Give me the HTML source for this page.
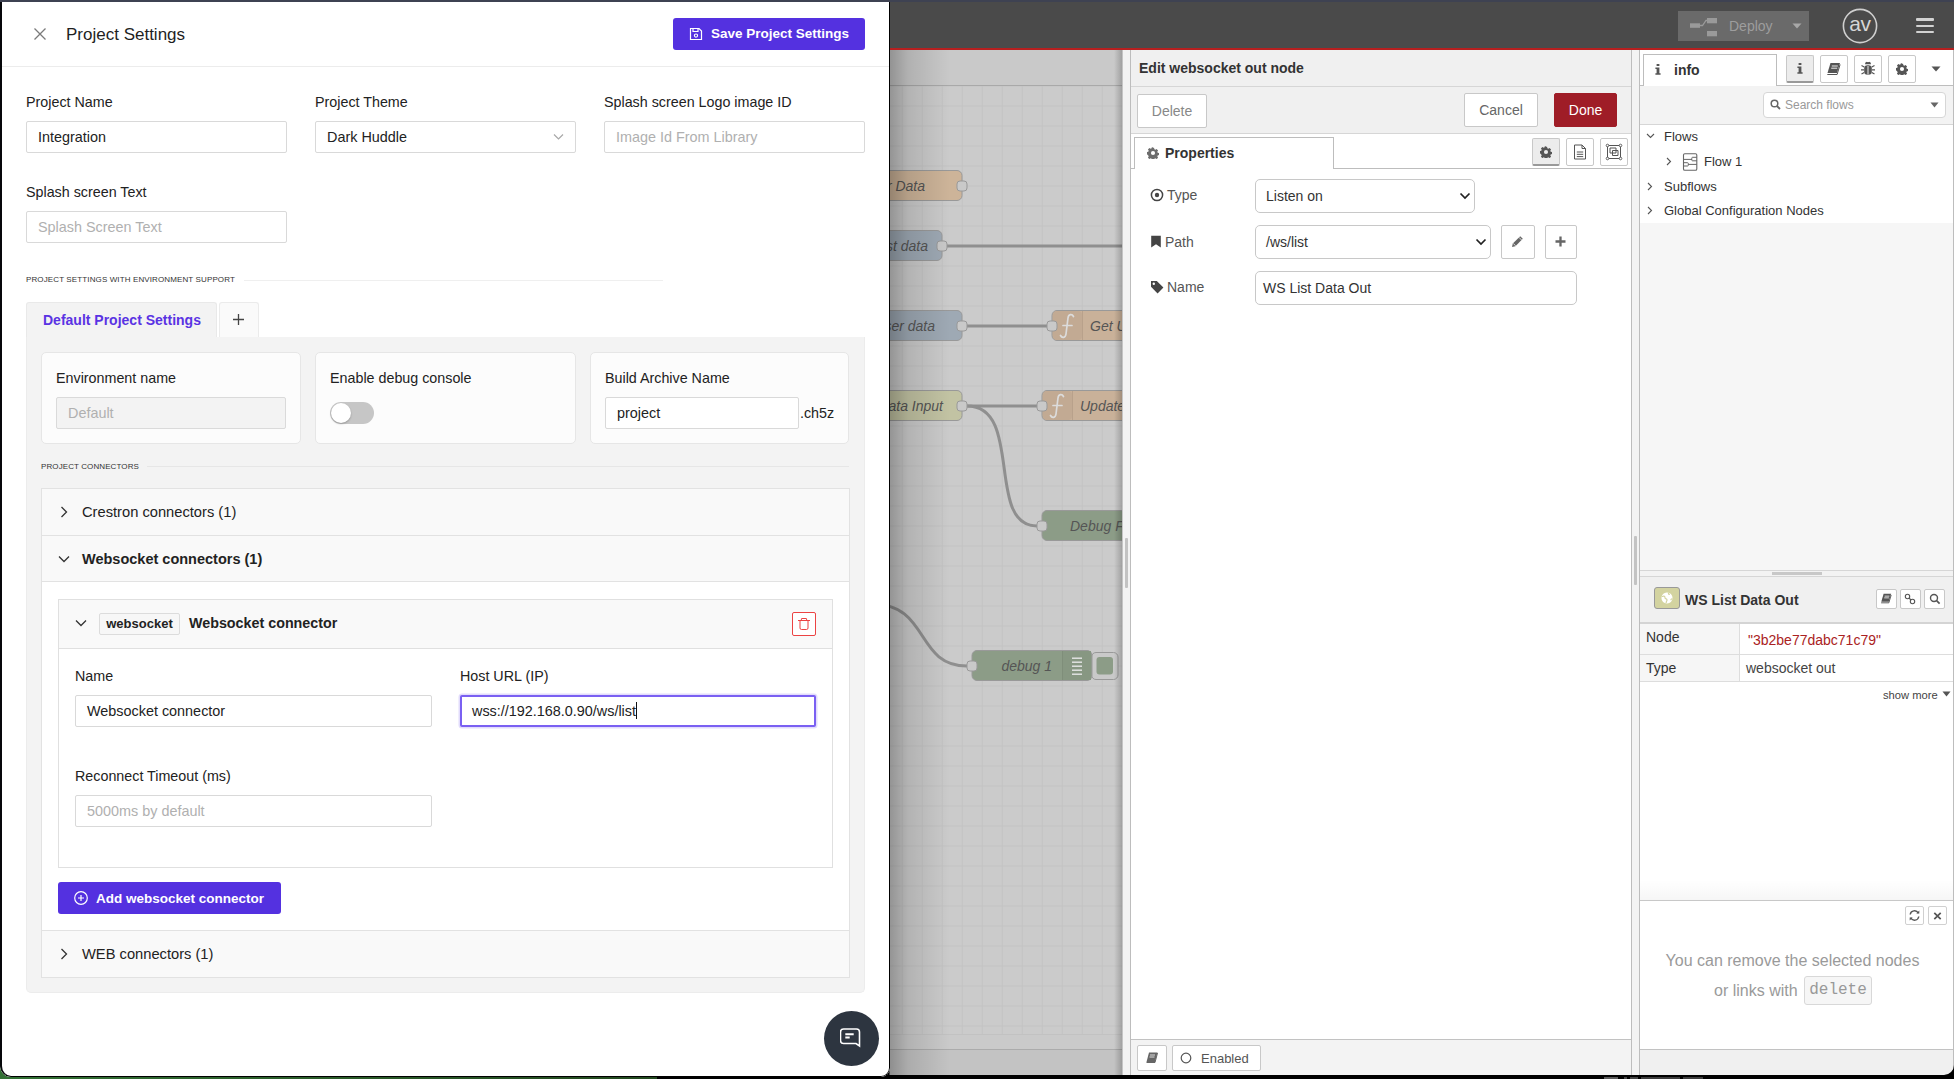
<!DOCTYPE html>
<html><head><meta charset="utf-8">
<style>
*{box-sizing:border-box;margin:0;padding:0}
html,body{width:1954px;height:1079px;overflow:hidden;background:#000;font-family:"Liberation Sans",sans-serif;color:#222}
.a{position:absolute}
/* left drawer */
#drawer{position:absolute;left:0;top:0;width:890px;height:1077px;background:#fff;border-bottom-left-radius:11px;border-bottom-right-radius:9px;overflow:hidden}
#dov{position:absolute;left:0;top:0;width:890px;height:1077px;border-left:2px solid #06070a;border-right:1px solid #000;border-bottom:1px solid #000;border-bottom-left-radius:11px;border-bottom-right-radius:9px}
.lbl{position:absolute;font-size:14.3px;color:#222;line-height:16px;margin-top:-1px;white-space:nowrap}
.inp{position:absolute;height:32px;border:1px solid #d9d9d9;border-radius:2px;background:#fff;font-size:14.4px;line-height:31px;padding-left:11px;color:#222;white-space:nowrap}
.ph{color:#b0b0b0}
.btnp{position:absolute;background:#5431e0;border-radius:3px;color:#fff;font-weight:bold;font-size:13.5px;white-space:nowrap}
.sec{position:absolute;font-size:9px;letter-spacing:0.6px;color:#333;white-space:nowrap}
.card{position:absolute;background:#fcfcfc;border:1px solid #e6e6e6;border-radius:5px}
.acc{position:absolute;left:41px;width:809px;background:#f9f9f9;border-top:1px solid #e2e2e2;font-size:14px;white-space:nowrap}
.nb{position:absolute;background:#fff;border:1px solid #c8c8c8;border-radius:2px;font-size:14px;line-height:32px;text-align:center;white-space:nowrap}
.ib{position:absolute;width:28px;height:28px;background:#fff;border:1px solid #c8c8c8;border-radius:2px}
.rl{position:absolute;font-size:14px;line-height:16px;color:#555;white-space:nowrap}
.sel{position:absolute;background:#fff;border:1px solid #c8c8c8;border-radius:5px;font-size:14px;line-height:32px;padding-left:10px;color:#333;white-space:nowrap}
.tr{position:absolute;font-size:13px;line-height:16px;color:#333;white-space:nowrap}
</style></head>
<body>
<!-- bottom desktop strip -->
<div class="a" style="left:0;top:1060px;width:657px;height:19px;background:linear-gradient(90deg,#327034,#23491f)"></div>


<!-- NODE-RED -->
<div id="nr" class="a" style="left:889px;top:0;width:1065px;height:1075px;background:#4a4a4a;overflow:hidden;border-bottom-right-radius:9px">
<!-- header -->
<div class="a" style="left:0;top:48px;width:1065px;height:2px;background:#b71f1f"></div>
<div class="a" style="left:789px;top:11px;width:131px;height:30px;background:#6a6a6a"></div>
<svg class="a" style="left:800px;top:17px" width="30" height="21" viewBox="0 0 30 21"><rect x="1" y="6.3" width="10" height="4.5" fill="#9a9a9a"/><path d="M10.5 8.5 L13.5 8.5 L17 3.5 L19 3.5" stroke="#9a9a9a" stroke-width="1.3" fill="none"/><rect x="18" y="1" width="10" height="5.3" fill="#9a9a9a"/><rect x="18" y="14" width="10" height="5.3" fill="#9a9a9a"/></svg>
<div class="a" style="left:840px;top:18px;font-size:14px;line-height:16px;color:#9d9d9d">Deploy</div>
<svg class="a" style="left:903px;top:23px" width="10" height="6" viewBox="0 0 10 6"><path d="M0.5 0.5h9l-4.5 5z" fill="#a8a8a8"/></svg>
<svg class="a" style="left:952px;top:8px" width="38" height="38" viewBox="0 0 38 38"><circle cx="19" cy="18" r="16.6" stroke="#cfcfcf" stroke-width="1.6" fill="none"/></svg>
<div class="a" style="left:952px;top:13px;width:38px;text-align:center;font-size:21px;line-height:22px;color:#d6d6d6;letter-spacing:-0.3px">av</div>
<div class="a" style="left:1027px;top:18px;width:18px;height:2.5px;border-radius:1px;background:#d2d2d2"></div>
<div class="a" style="left:1027px;top:24.5px;width:18px;height:2.5px;border-radius:1px;background:#d2d2d2"></div>
<div class="a" style="left:1027px;top:30.5px;width:18px;height:2.5px;border-radius:1px;background:#d2d2d2"></div>
<!-- canvas -->
<div class="a" style="left:1px;top:50px;width:232px;height:1025px;background:#c9c9c9;overflow:hidden">
<svg class="a" style="left:0;top:0" width="232" height="1025" viewBox="890 50 232 1025">
<defs>
<pattern id="grid" x="901.7" y="105.5" width="20" height="20" patternUnits="userSpaceOnUse"><rect x="0" y="0" width="20" height="20" fill="#cbcbcb"/><path d="M0 0.5H20M0.5 0V20" stroke="#c3c3c3" stroke-width="1"/></pattern>
<linearGradient id="lsh" x1="0" x2="1" y1="0" y2="0"><stop offset="0" stop-color="#000" stop-opacity="0.27"/><stop offset="0.3" stop-color="#000" stop-opacity="0.12"/><stop offset="1" stop-color="#000" stop-opacity="0"/></linearGradient>
<linearGradient id="rsh" x1="0" x2="1" y1="0" y2="0"><stop offset="0" stop-color="#000" stop-opacity="0"/><stop offset="1" stop-color="#000" stop-opacity="0.2"/></linearGradient>
</defs>
<rect x="890" y="50" width="232" height="35" fill="#c9c9c9"/>
<rect x="890" y="85" width="232" height="1" fill="#a9a9a9"/>
<rect x="890" y="86" width="232" height="948" fill="url(#grid)"/>
<rect x="890" y="1034" width="232" height="15" fill="#cacaca"/><rect x="890" y="1034" width="232" height="1" fill="#c2c2c2"/>
<rect x="890" y="1049" width="232" height="1" fill="#ababab"/>
<rect x="890" y="1050" width="232" height="25" fill="#c3c3c3"/>
<!-- wires -->
<g stroke="#8f8f8f" stroke-width="3" fill="none">
<path d="M947 246H1122"/>
<path d="M967 326H1047"/>
<path d="M967 406H1037"/>
<path d="M967 406C1024 406 985 526 1037 526"/>
<path d="M872 604C930 604 915 666 967 666"/>
</g>
<!-- nodes -->
<g stroke="#999" stroke-width="1">
<rect x="850" y="170.5" width="112" height="30" rx="5" fill="#cdb499"/>
<rect x="850" y="230.5" width="92" height="30" rx="5" fill="#9ea9b4"/>
<rect x="850" y="310.5" width="112" height="30" rx="5" fill="#9ea9b4"/>
<rect x="850" y="390.5" width="112" height="30" rx="5" fill="#c2c3a3"/>
<rect x="1052" y="310.5" width="120" height="30" rx="5" fill="#c9b199"/>
<rect x="1042" y="390.5" width="120" height="30" rx="5" fill="#c9b199"/>
<rect x="1042" y="510.5" width="120" height="30" rx="5" fill="#8c9c87"/>
<rect x="1091.5" y="652.5" width="26.5" height="27" rx="4.5" fill="#c9c9c9"/>
<rect x="972" y="650.5" width="120" height="30" rx="5" fill="#8c9c87"/>
</g>
<rect x="1053" y="311" width="29" height="29" rx="4" fill="#c2aa93"/>
<rect x="1082" y="311" width="0.8" height="29" fill="#b59e88"/>
<rect x="1043" y="391" width="29" height="29" rx="4" fill="#c2aa93"/>
<rect x="1072" y="391" width="0.8" height="29" fill="#b59e88"/>
<rect x="1062" y="651" width="29" height="29" fill="#879782"/>
<rect x="1062" y="651" width="0.8" height="29" fill="#7d8c78"/>
<rect x="1096.5" y="657" width="16.5" height="17.5" rx="3" fill="#8c9c87"/>
<g fill="#e6e6e6"><rect x="1072" y="657.5" width="10" height="1.4"/><rect x="1072" y="661.5" width="10" height="1.4"/><rect x="1072" y="665.5" width="10" height="1.4"/><rect x="1072" y="669.5" width="10" height="1.4"/><rect x="1072" y="673.5" width="10" height="1.4"/></g>
<path d="M1073.5 316.5C1072 313.5 1068.5 314 1068 318L1066 334C1065.5 338 1062 338.5 1060.5 335.5M1063 325.5H1072 M1063.5 396.5C1062 393.5 1058.5 394 1058 398L1056 414C1055.5 418 1052 418.5 1050.5 415.5M1053 405.5H1062" stroke="#dcdcdc" stroke-width="1.7" fill="none" stroke-linecap="round"/>
<g fill="#555" font-family="Liberation Sans" font-style="italic" font-size="14">
<text x="925" y="190.5" text-anchor="end">r Data</text>
<text x="928" y="250.5" text-anchor="end">st data</text>
<text x="935" y="330.5" text-anchor="end">ser data</text>
<text x="943" y="410.5" text-anchor="end">ata Input</text>
<text x="1090" y="330.5">Get User</text>
<text x="1080" y="410.5">Update</text>
<text x="1070" y="530.5">Debug Flow</text>
<text x="1052" y="670.5" text-anchor="end">debug 1</text>
</g>
<g fill="#c9c9c9" stroke="#999" stroke-width="1">
<rect x="957" y="181" width="10" height="10" rx="3"/>
<rect x="937" y="241" width="10" height="10" rx="3"/>
<rect x="957" y="321" width="10" height="10" rx="3"/>
<rect x="1047" y="321" width="10" height="10" rx="3"/>
<rect x="957" y="401" width="10" height="10" rx="3"/>
<rect x="1037" y="401" width="10" height="10" rx="3"/>
<rect x="1037" y="521" width="10" height="10" rx="3"/>
<rect x="967" y="661" width="10" height="10" rx="3"/>
</g>
<rect x="890" y="50" width="60" height="1025" fill="url(#lsh)"/>
<rect x="1114" y="50" width="8" height="1025" fill="url(#rsh)"/>
</svg>
</div>
<!-- tray strip -->
<div class="a" style="left:233px;top:50px;width:9px;height:1025px;background:#f3f3f3;border-left:1px solid #c4c4c4;border-right:1px solid #bdbdbd"></div>
<div class="a" style="left:236px;top:538px;width:3px;height:50px;background:#c3c3c3;border-radius:1px"></div>
<!-- tray -->
<div id="tray" class="a" style="left:242px;top:50px;width:500px;height:1025px;background:#fff">
</div>
<!-- sidebar separator -->
<div class="a" style="left:742px;top:50px;width:9px;height:1025px;background:#f3f3f3;border-left:1px solid #bdbdbd;border-right:1px solid #bdbdbd"></div>
<div class="a" style="left:745px;top:536px;width:3px;height:49px;background:#c3c3c3;border-radius:1px"></div>
<!-- sidebar -->
<div id="side" class="a" style="left:751px;top:50px;width:314px;height:1025px;background:#fff;border-right:1px solid #bdbdbd">
</div>
</div>
<!-- TRAY CONTENT (page coords) -->
<div class="a" style="left:1131px;top:50px;width:500px;height:37px;background:#f0f0f0;border-bottom:1px solid #d6d6d6"></div>
<div class="a" style="left:1139px;top:60px;font-size:14px;line-height:16px;font-weight:bold;color:#333;white-space:nowrap">Edit websocket out node</div>
<div class="a" style="left:1131px;top:87px;width:500px;height:47px;background:#f0f0f0;border-bottom:1px solid #d6d6d6"></div>
<div class="nb" style="left:1137px;top:94px;width:70px;height:34px;color:#888">Delete</div>
<div class="nb" style="left:1464px;top:93px;width:74px;height:34px;color:#666">Cancel</div>
<div class="nb" style="left:1554px;top:93px;width:63px;height:34px;background:#9f1d27;border-color:#9f1d27;color:#fff">Done</div>
<div class="a" style="left:1131px;top:168px;width:500px;height:1px;background:#bdbdbd"></div>
<div class="a" style="left:1134px;top:137px;width:200px;height:32px;background:#fff;border:1px solid #bdbdbd;border-bottom:none"></div>
<svg class="a" style="left:1147px;top:147px" width="12" height="12" viewBox="0 0 14 14"><path fill="#6c6c6c" d="M7 0.8l1.2 0.2 .4 1.7 1.1.5 1.5-.9 1.7 1.7-.9 1.5.5 1.1 1.7.4v2.4l-1.7.4-.5 1.1.9 1.5-1.7 1.7-1.5-.9-1.1.5-.4 1.7H5.8l-.4-1.7-1.1-.5-1.5.9-1.7-1.7.9-1.5-.5-1.1L-.2 8.2V5.8l1.7-.4.5-1.1-.9-1.5 1.7-1.7 1.5.9 1.1-.5.4-1.7z M7 4.6a2.4 2.4 0 1 0 0 4.8 2.4 2.4 0 1 0 0-4.8z" fill-rule="evenodd"/></svg>
<div class="a" style="left:1165px;top:145px;font-size:14px;line-height:16px;font-weight:bold;color:#333">Properties</div>
<div class="ib" style="left:1532px;top:138px;background:#ececec;border-bottom:2px solid #999"></div>
<div class="ib" style="left:1566px;top:138px"></div>
<div class="ib" style="left:1600px;top:138px"></div>
<svg class="a" style="left:1540px;top:146px" width="12" height="12" viewBox="0 0 14 14"><path fill="#555" d="M7 0.8l1.2 0.2 .4 1.7 1.1.5 1.5-.9 1.7 1.7-.9 1.5.5 1.1 1.7.4v2.4l-1.7.4-.5 1.1.9 1.5-1.7 1.7-1.5-.9-1.1.5-.4 1.7H5.8l-.4-1.7-1.1-.5-1.5.9-1.7-1.7.9-1.5-.5-1.1L-.2 8.2V5.8l1.7-.4.5-1.1-.9-1.5 1.7-1.7 1.5.9 1.1-.5.4-1.7z M7 4.6a2.4 2.4 0 1 0 0 4.8 2.4 2.4 0 1 0 0-4.8z" fill-rule="evenodd"/></svg>
<svg class="a" style="left:1573px;top:144px" width="14" height="16" viewBox="0 0 14 16"><path d="M1.5 1h7.5l3.5 3.5v10.5h-11z M9 1v3.5h3.5 M3.8 8h6.4M3.8 10.3h6.4M3.8 12.6h6.4" stroke="#555" stroke-width="1" fill="none"/></svg>
<svg class="a" style="left:1605px;top:143px" width="18" height="18" viewBox="0 0 18 18"><path d="M2.5 2.5h13v13h-13z" stroke="#555" stroke-width="1" fill="none"/><path d="M5 5h6v5h-6z M7.5 7.5h5.5v5h-5.5z" stroke="#555" stroke-width="1" fill="none"/><g fill="#fff" stroke="#555" stroke-width="0.9"><circle cx="2.5" cy="2.5" r="1.3"/><circle cx="15.5" cy="2.5" r="1.3"/><circle cx="2.5" cy="15.5" r="1.3"/><circle cx="15.5" cy="15.5" r="1.3"/></g></svg>
<!-- rows -->
<svg class="a" style="left:1150px;top:188px" width="14" height="14" viewBox="0 0 14 14"><circle cx="7" cy="7" r="5.6" stroke="#444" stroke-width="1.5" fill="none"/><circle cx="7" cy="7" r="2.2" fill="#444"/></svg>
<div class="rl" style="left:1167px;top:187px">Type</div>
<div class="sel" style="left:1255px;top:179px;width:220px;height:34px">Listen on</div>
<svg class="a" style="left:1459px;top:192px" width="12" height="8" viewBox="0 0 12 8"><path d="M1.5 1.5L6 6L10.5 1.5" stroke="#222" stroke-width="1.7" fill="none"/></svg>
<svg class="a" style="left:1150px;top:235px" width="12" height="13" viewBox="0 0 12 13"><path d="M1.2 0.8h9.6v11.6l-4.8-3.2-4.8 3.2z" fill="#444"/></svg>
<div class="rl" style="left:1165px;top:234px">Path</div>
<div class="sel" style="left:1255px;top:225px;width:236px;height:34px">/ws/list</div>
<svg class="a" style="left:1475px;top:238px" width="12" height="8" viewBox="0 0 12 8"><path d="M1.5 1.5L6 6L10.5 1.5" stroke="#222" stroke-width="1.7" fill="none"/></svg>
<div class="sel" style="left:1501px;top:225px;width:34px;height:34px;border-radius:2px"></div>
<svg class="a" style="left:1511px;top:235px" width="13" height="13" viewBox="0 0 13 13"><path d="M1 12l0.8-3.4 7.4-7.4 2.6 2.6-7.4 7.4z" fill="#666"/><path d="M8 2.4l2.6 2.6M2.2 8.4l2.4 2.4" stroke="#fff" stroke-width="0.8"/></svg>
<div class="sel" style="left:1545px;top:225px;width:32px;height:34px;border-radius:2px"></div>
<svg class="a" style="left:1554px;top:235px" width="13" height="13" viewBox="0 0 13 13"><path d="M6.5 1.5v10M1.5 6.5h10" stroke="#666" stroke-width="2.3"/></svg>
<svg class="a" style="left:1150px;top:280px" width="14" height="14" viewBox="0 0 14 14"><path d="M1 1h5.8l6.6 6.6-5.8 5.8-6.6-6.6z" fill="#444"/><circle cx="3.8" cy="3.8" r="1.2" fill="#fff"/></svg>
<div class="rl" style="left:1167px;top:279px">Name</div>
<div class="sel" style="left:1255px;top:271px;width:322px;height:34px;padding-left:7px">WS List Data Out</div>
<!-- tray footer -->
<div class="a" style="left:1131px;top:1039px;width:500px;height:36px;background:#f3f3f3;border-top:1px solid #c2c2c2"></div>
<div class="nb" style="left:1137px;top:1045px;width:30px;height:26px"></div>
<svg class="a" style="left:1145px;top:1051px" width="14" height="14" viewBox="0 0 14 14"><path d="M4 1.5h8.5l-2.5 9.5h-8.5z" fill="#666"/><path d="M1.5 11.5h8.5l2.5-9.5" stroke="#666" stroke-width="1" fill="none"/><path d="M5 4h5M4.5 6h5" stroke="#fff" stroke-width="0.8"/></svg>
<div class="nb" style="left:1172px;top:1045px;width:89px;height:26px;text-align:left;padding-left:28px;line-height:25px;color:#555;font-size:13px">Enabled</div>
<svg class="a" style="left:1180px;top:1052px" width="12" height="12" viewBox="0 0 12 12"><circle cx="6" cy="6" r="4.8" stroke="#555" stroke-width="1.2" fill="none"/></svg>
<!-- SIDEBAR CONTENT (page coords) -->
<div class="a" style="left:1640px;top:85px;width:313px;height:1px;background:#bdbdbd"></div>
<div class="a" style="left:1643px;top:54px;width:134px;height:32px;background:#fff;border:1px solid #bdbdbd;border-bottom:none"></div>
<svg class="a" style="left:1655px;top:64px" width="6" height="11" viewBox="0 0 6 11"><rect x="1.6" y="0" width="2.8" height="2" fill="#555"/><path d="M0.4 3.6H4.4V9.3H5.6V10.8H0.4V9.3H1.6V5.1H0.4z" fill="#555"/></svg>
<div class="a" style="left:1674px;top:62px;font-size:14px;line-height:16px;font-weight:bold;color:#333">info</div>
<div class="ib" style="left:1786px;top:55px;background:#ececec;border-bottom:2px solid #999"></div>
<div class="ib" style="left:1820px;top:55px"></div>
<div class="ib" style="left:1854px;top:55px"></div>
<div class="ib" style="left:1888px;top:55px"></div>
<svg class="a" style="left:1797px;top:63px" width="6" height="11" viewBox="0 0 6 11"><rect x="1.6" y="0" width="2.8" height="2" fill="#555"/><path d="M0.4 3.6H4.4V9.3H5.6V10.8H0.4V9.3H1.6V5.1H0.4z" fill="#555"/></svg>
<svg class="a" style="left:1826px;top:62px" width="15" height="14" viewBox="0 0 15 14"><path d="M4.5 1h9.5l-3 10h-9.5z" fill="#555"/><path d="M1.3 12.5h9.8l3-10" stroke="#555" stroke-width="1" fill="none"/><path d="M5.8 4h6M5.2 6.2h6" stroke="#fff" stroke-width="0.9"/></svg>
<svg class="a" style="left:1860px;top:61px" width="16" height="15" viewBox="0 0 16 15"><path d="M5 3.2a3 2.2 0 0 1 6 0z" fill="#555"/><rect x="4.2" y="4.2" width="7.6" height="9.5" rx="3.2" fill="#555"/><path d="M8 5v8.5" stroke="#fff" stroke-width="0.9"/><path d="M1.5 4.5l2.7 1.5M14.5 4.5l-2.7 1.5M1 8.8h3.2M15 8.8h-3.2M1.5 13l2.7-1.5M14.5 13l-2.7-1.5M6 1l1 1.3M10 1l-1 1.3" stroke="#555" stroke-width="1.2"/></svg>
<svg class="a" style="left:1896px;top:63px" width="12" height="12" viewBox="0 0 14 14"><path fill="#555" d="M7 0.8l1.2 0.2 .4 1.7 1.1.5 1.5-.9 1.7 1.7-.9 1.5.5 1.1 1.7.4v2.4l-1.7.4-.5 1.1.9 1.5-1.7 1.7-1.5-.9-1.1.5-.4 1.7H5.8l-.4-1.7-1.1-.5-1.5.9-1.7-1.7.9-1.5-.5-1.1L-.2 8.2V5.8l1.7-.4.5-1.1-.9-1.5 1.7-1.7 1.5.9 1.1-.5.4-1.7z M7 4.6a2.4 2.4 0 1 0 0 4.8 2.4 2.4 0 1 0 0-4.8z" fill-rule="evenodd"/></svg>
<svg class="a" style="left:1931px;top:66px" width="10" height="6" viewBox="0 0 10 6"><path d="M0.5 0.5h9l-4.5 5z" fill="#555"/></svg>
<!-- search row -->
<div class="a" style="left:1640px;top:86px;width:313px;height:39px;background:#f3f3f3;border-bottom:1px solid #d6d6d6"></div>
<div class="a" style="left:1763px;top:92px;width:183px;height:26px;background:#fff;border:1px solid #d6d6d6;border-radius:4px"></div>
<svg class="a" style="left:1770px;top:99px" width="11" height="11" viewBox="0 0 11 11"><circle cx="4.5" cy="4.5" r="3.3" stroke="#666" stroke-width="1.5" fill="none"/><path d="M7 7l3 3" stroke="#666" stroke-width="1.8"/></svg>
<div class="a" style="left:1785px;top:97px;font-size:12px;line-height:16px;color:#999">Search flows</div>
<svg class="a" style="left:1930px;top:102px" width="9" height="6" viewBox="0 0 9 6"><path d="M0.5 0.5h8l-4 5z" fill="#666"/></svg>
<!-- tree -->
<div class="a" style="left:1640px;top:125px;width:313px;height:98px;background:#fff"></div>
<div class="a" style="left:1640px;top:223px;width:313px;height:347px;background:#f6f6f6"></div>
<svg class="a" style="left:1646px;top:133px" width="9" height="6" viewBox="0 0 9 6"><path d="M1 1l3.5 3.5L8 1" stroke="#555" stroke-width="1.1" fill="none"/></svg>
<div class="tr" style="left:1664px;top:129px">Flows</div>
<svg class="a" style="left:1666px;top:157px" width="6" height="9" viewBox="0 0 6 9"><path d="M1 1l3.5 3.5L1 8" stroke="#555" stroke-width="1.1" fill="none"/></svg>
<svg class="a" style="left:1682px;top:153px" width="16" height="18" viewBox="0 0 16 18"><rect x="1.5" y="0.8" width="13.3" height="16.5" rx="1.3" stroke="#666" stroke-width="1.1" fill="none"/><path d="M1.5 6.4H10 M10.5 4.3H14.8 M10.5 7.8H14.8 M10.5 4.3Q9.8 4.3 9.8 5.2V7Q9.8 7.8 10.5 7.8 M1.5 9.7H5.5Q6.3 9.7 6.3 10.5V12.2Q6.3 13 5.5 13H1.5 M6.3 11.4H14.8" stroke="#666" stroke-width="1" fill="none"/></svg>
<div class="tr" style="left:1704px;top:154px">Flow 1</div>
<svg class="a" style="left:1647px;top:182px" width="6" height="9" viewBox="0 0 6 9"><path d="M1 1l3.5 3.5L1 8" stroke="#555" stroke-width="1.1" fill="none"/></svg>
<div class="tr" style="left:1664px;top:179px">Subflows</div>
<svg class="a" style="left:1647px;top:206px" width="6" height="9" viewBox="0 0 6 9"><path d="M1 1l3.5 3.5L1 8" stroke="#555" stroke-width="1.1" fill="none"/></svg>
<div class="tr" style="left:1664px;top:203px">Global Configuration Nodes</div>
<!-- splitter -->
<div class="a" style="left:1640px;top:570px;width:313px;height:7px;background:#f3f3f3;border-top:1px solid #d6d6d6;border-bottom:1px solid #d6d6d6"></div>
<div class="a" style="left:1772px;top:572px;width:50px;height:3px;background:#c8c8c8"></div>
<!-- node header -->
<div class="a" style="left:1640px;top:577px;width:313px;height:47px;background:#f0f0f0;border-bottom:2px solid #d4d4d4"></div>
<div class="a" style="left:1654px;top:587px;width:26px;height:22px;border-radius:3px;background:#d3d3a0;border:1px solid #999"></div>
<svg class="a" style="left:1660px;top:591px" width="14" height="14" viewBox="0 0 14 14"><path d="M7 1.5a5.5 5.5 0 1 1 -0.01 0z" fill="#fff"/><path d="M1.8 5.5c1.2.2 1.6-.8 2.6-.2s.2 1.6 1 2.2 1.8.2 1.6 1.6-1 1.2-.8 3M8.5 1.8c-.3 1 .4 1.6 1.3 1.5M12.4 8c-.9-.4-1.6.4-1.5 1.3" stroke="#d3d3a0" stroke-width="1.2" fill="none"/></svg>
<div class="a" style="left:1685px;top:592px;font-size:14px;line-height:16px;font-weight:bold;color:#333;white-space:nowrap">WS List Data Out</div>
<div class="ib" style="left:1876px;top:589px;width:21px;height:20px"></div>
<div class="ib" style="left:1900px;top:589px;width:21px;height:20px"></div>
<div class="ib" style="left:1924px;top:589px;width:21px;height:20px"></div>
<svg class="a" style="left:1880px;top:593px" width="12" height="11" viewBox="0 0 15 14"><path d="M4.5 1h9.5l-3 10h-9.5z" fill="#555"/><path d="M1.3 12.5h9.8l3-10" stroke="#555" stroke-width="1.2" fill="none"/><path d="M5.8 4h6M5.2 6.2h6" stroke="#fff" stroke-width="1"/></svg>
<svg class="a" style="left:1904px;top:593px" width="12" height="12" viewBox="0 0 12 12"><circle cx="3.5" cy="3.5" r="2.2" stroke="#555" stroke-width="1.1" fill="none"/><circle cx="8.5" cy="8.5" r="2.2" stroke="#555" stroke-width="1.1" fill="none"/><path d="M5 5l2 2" stroke="#555" stroke-width="1.1"/></svg>
<svg class="a" style="left:1929px;top:593px" width="12" height="12" viewBox="0 0 12 12"><circle cx="5" cy="5" r="3.5" stroke="#555" stroke-width="1.4" fill="none"/><path d="M7.6 7.6l3 3" stroke="#555" stroke-width="1.6"/></svg>
<!-- table -->
<div class="a" style="left:1640px;top:624px;width:313px;height:57px;background:#fff"></div>
<div class="a" style="left:1640px;top:624px;width:100px;height:57px;background:#f6f6f6;border-right:1px solid #ddd"></div>
<div class="a" style="left:1640px;top:654px;width:313px;height:1px;background:#ddd"></div>
<div class="a" style="left:1640px;top:681px;width:313px;height:1px;background:#ddd"></div>
<div class="tr" style="left:1646px;top:629px;color:#333;font-size:14px">Node</div>
<div class="tr" style="left:1748px;top:632px;color:#aa2222;font-size:14px">"3b2be77dabc71c79"</div>
<div class="tr" style="left:1646px;top:660px;color:#333;font-size:14px">Type</div>
<div class="tr" style="left:1746px;top:660px;color:#444;font-size:14px">websocket out</div>
<div class="a" style="left:1883px;top:688px;font-size:11.2px;line-height:14px;color:#444">show more</div>
<svg class="a" style="left:1942px;top:691px" width="9" height="6" viewBox="0 0 9 6"><path d="M0.5 0.5h8l-4 5z" fill="#555"/></svg>
<!-- help -->
<div class="a" style="left:1640px;top:880px;width:313px;height:20px;background:linear-gradient(180deg,rgba(0,0,0,0),rgba(0,0,0,0.035))"></div>
<div class="a" style="left:1640px;top:900px;width:313px;height:1px;background:#c8c8c8"></div>
<div class="ib" style="left:1905px;top:906px;width:19px;height:19px;border-color:#d0d0d0"></div>
<div class="ib" style="left:1928px;top:906px;width:19px;height:19px;border-color:#d0d0d0"></div>
<svg class="a" style="left:1908px;top:909px" width="13" height="13" viewBox="0 0 13 13"><path d="M2.2 5.5A4.3 4.3 0 0 1 10.3 4.2M10.8 7.5A4.3 4.3 0 0 1 2.7 8.8" stroke="#555" stroke-width="1.4" fill="none"/><path d="M8.3 4.5h3v-3z M4.7 8.5h-3v3z" fill="#555"/></svg>
<svg class="a" style="left:1932px;top:911px" width="11" height="10" viewBox="0 0 11 10"><path d="M2.3 1.8l6.4 6.4M8.7 1.8l-6.4 6.4" stroke="#555" stroke-width="1.7"/></svg>
<div class="a" style="left:1636px;top:951px;width:313px;text-align:center;font-size:16px;line-height:20px;color:#9a9a9a;white-space:nowrap">You can remove the selected nodes</div>
<div class="a" style="left:1714px;top:981px;font-size:16px;line-height:20px;color:#9a9a9a;white-space:nowrap">or links with</div>
<div class="a" style="left:1804px;top:976px;width:68px;height:29px;border:1px solid #d8d8d8;border-radius:3px;background:#f6f6f6;font-family:'Liberation Mono',monospace;font-size:16px;line-height:27px;text-align:center;color:#999">delete</div>
<!-- side footer -->
<div class="a" style="left:1640px;top:1049px;width:313px;height:26px;background:#f0f0f0;border-top:1px solid #c2c2c2"></div>
<div id="drawer">
<!-- header -->
<svg class="a" style="left:33px;top:27px" width="14" height="14" viewBox="0 0 14 14"><path d="M1.5 1.5L12.5 12.5M12.5 1.5L1.5 12.5" stroke="#7a7a7a" stroke-width="1.3" fill="none"/></svg>
<div class="lbl" style="left:66px;top:27px;font-size:17px;line-height:17px;color:#1f1f1f">Project Settings</div>
<div class="btnp" style="left:673px;top:18px;width:192px;height:32px;line-height:32px;padding-left:38px">Save Project Settings</div>
<svg class="a" style="left:689px;top:27px" width="14" height="14" viewBox="0 0 14 14"><path d="M1.5 1.5h8.5l2.5 2.5v8.5h-11z M4 1.5v3h5v-3" stroke="#fff" stroke-width="1.2" fill="none"/><circle cx="7" cy="8.6" r="1.6" stroke="#fff" stroke-width="1.1" fill="none"/></svg>
<div class="a" style="left:2px;top:66px;width:887px;height:1px;background:#ececec"></div>
<!-- row1 -->
<div class="lbl" style="left:26px;top:95px">Project Name</div>
<div class="lbl" style="left:315px;top:95px">Project Theme</div>
<div class="lbl" style="left:604px;top:95px">Splash screen Logo image ID</div>
<div class="inp" style="left:26px;top:121px;width:261px">Integration</div>
<div class="inp" style="left:315px;top:121px;width:261px">Dark Huddle</div>
<svg class="a" style="left:553px;top:133px" width="11" height="8" viewBox="0 0 11 8"><path d="M1 1.5L5.5 6L10 1.5" stroke="#a8a8a8" stroke-width="1.2" fill="none"/></svg>
<div class="inp ph" style="left:604px;top:121px;width:261px">Image Id From Library</div>
<div class="lbl" style="left:26px;top:185px">Splash screen Text</div>
<div class="inp ph" style="left:26px;top:211px;width:261px">Splash Screen Text</div>
<!-- section -->
<div class="sec" style="left:26px;top:275px;font-size:8px;letter-spacing:0.12px">PROJECT SETTINGS WITH ENVIRONMENT SUPPORT</div>
<div class="a" style="left:244px;top:280px;width:419px;height:1px;background:#efefef"></div>
<!-- tabs -->
<div class="a" style="left:26px;top:302px;width:191px;height:36px;background:#f3f3f3;border:1px solid #e9e9e9;border-bottom:none;border-radius:3px 3px 0 0"></div>
<div class="lbl" style="left:43px;top:313px;font-weight:bold;color:#5a33e3;font-size:14px">Default Project Settings</div>
<div class="a" style="left:219px;top:302px;width:40px;height:35px;background:#fafafa;border:1px solid #ebebeb;border-bottom:none;border-radius:3px 3px 0 0"></div>
<svg class="a" style="left:232px;top:313px" width="13" height="13" viewBox="0 0 13 13"><path d="M6.5 1v11M1 6.5h11" stroke="#444" stroke-width="1.3"/></svg>
<!-- container -->
<div class="a" style="left:26px;top:337px;width:839px;height:656px;background:#f3f3f3;border:1px solid #ececec;border-top:none;border-radius:0 0 5px 5px"></div>
<div class="card" style="left:41px;top:352px;width:260px;height:92px"></div>
<div class="card" style="left:315px;top:352px;width:261px;height:92px"></div>
<div class="card" style="left:590px;top:352px;width:259px;height:92px"></div>
<div class="lbl" style="left:56px;top:371px">Environment name</div>
<div class="lbl" style="left:330px;top:371px">Enable debug console</div>
<div class="lbl" style="left:605px;top:371px">Build Archive Name</div>
<div class="inp ph" style="left:56px;top:397px;width:230px;background:#f3f3f3;border-color:#dadada">Default</div>
<div class="a" style="left:330px;top:402px;width:44px;height:22px;border-radius:11px;background:#c6c6c6"></div>
<div class="a" style="left:331px;top:403px;width:20px;height:20px;border-radius:10px;background:#fff;box-shadow:0 1px 2px rgba(0,0,0,.25)"></div>
<div class="inp" style="left:605px;top:397px;width:194px">project</div>
<div class="lbl" style="left:800px;top:406px">.ch5z</div>
<div class="sec" style="left:41px;top:462px;font-size:8px;letter-spacing:0.1px">PROJECT CONNECTORS</div>
<div class="a" style="left:147px;top:466px;width:702px;height:1px;background:#e6e6e6"></div>
<!-- accordion -->
<div class="a" style="left:41px;top:488px;width:809px;height:490px;background:#fff;border:1px solid #e2e2e2"></div>
<div class="acc" style="top:489px;height:47px;border-top:none;left:42px;width:807px"></div>
<svg class="a" style="left:59px;top:505px" width="10" height="14" viewBox="0 0 10 14"><path d="M2.5 2L7.5 7L2.5 12" stroke="#333" stroke-width="1.3" fill="none"/></svg>
<div class="lbl" style="left:82px;top:506px;font-size:14.7px;line-height:14.5px">Crestron connectors (1)</div>
<div class="acc" style="top:535px;height:47px;left:42px;width:807px;border-bottom:1px solid #e2e2e2"></div>
<svg class="a" style="left:57px;top:554px" width="14" height="10" viewBox="0 0 14 10"><path d="M2 2.5L7 7.5L12 2.5" stroke="#333" stroke-width="1.3" fill="none"/></svg>
<div class="lbl" style="left:82px;top:553px;font-size:14.5px;line-height:14.5px;font-weight:bold">Websocket connectors (1)</div>
<!-- inner card -->
<div class="a" style="left:58px;top:599px;width:775px;height:269px;background:#fff;border:1px solid #e0e0e0"></div>
<div class="a" style="left:59px;top:600px;width:773px;height:49px;background:#f9f9f9;border-bottom:1px solid #e0e0e0"></div>
<svg class="a" style="left:74px;top:618px" width="14" height="10" viewBox="0 0 14 10"><path d="M2 2.5L7 7.5L12 2.5" stroke="#333" stroke-width="1.3" fill="none"/></svg>
<div class="a" style="left:99px;top:613px;width:81px;height:22px;background:#f7f7f7;border:1px solid #dcdcdc;border-radius:2px;font-size:13px;font-weight:bold;line-height:20px;text-align:center;color:#222">websocket</div>
<div class="lbl" style="left:189px;top:617px;font-weight:bold;font-size:14.3px;line-height:14.3px">Websocket connector</div>
<div class="a" style="left:792px;top:612px;width:24px;height:24px;border:1px solid #ec4343;border-radius:2px;background:#fff"></div>
<svg class="a" style="left:797px;top:617px" width="14" height="14" viewBox="0 0 14 14"><path d="M1 3.5H13 M3 3.8V11Q3 12.5 4.5 12.5H9.5Q11 12.5 11 11V3.8 M4.2 3.5L4.6 1.5H9.4L9.8 3.5" stroke="#ec4343" stroke-width="1" fill="none"/></svg>
<div class="lbl" style="left:75px;top:669px">Name</div>
<div class="lbl" style="left:460px;top:669px">Host URL (IP)</div>
<div class="inp" style="left:75px;top:695px;width:357px">Websocket connector</div>
<div class="inp" style="left:460px;top:695px;width:356px;border:2px solid #7a60f2;box-shadow:0 0 0 1.5px rgba(122,96,242,.22);padding-left:10px;line-height:29px">wss://192.168.0.90/ws/list<span style="display:inline-block;width:1px;height:17px;background:#111;vertical-align:-3px"></span></div>
<div class="lbl" style="left:75px;top:769px">Reconnect Timeout (ms)</div>
<div class="inp ph" style="left:75px;top:795px;width:357px">5000ms by default</div>
<div class="btnp" style="left:58px;top:882px;width:223px;height:32px;line-height:33px;padding-left:38px">Add websocket connector</div>
<svg class="a" style="left:73px;top:890px" width="16" height="16" viewBox="0 0 16 16"><circle cx="8" cy="8" r="6.3" stroke="#fff" stroke-width="1.2" fill="none"/><path d="M8 5v6M5 8h6" stroke="#fff" stroke-width="1.2"/></svg>
<div class="acc" style="top:930px;height:47px;left:42px;width:807px;border-top:1px solid #e2e2e2"></div>
<svg class="a" style="left:59px;top:947px" width="10" height="14" viewBox="0 0 10 14"><path d="M2.5 2L7.5 7L2.5 12" stroke="#333" stroke-width="1.3" fill="none"/></svg>
<div class="lbl" style="left:82px;top:948px;font-size:14.7px;line-height:14.5px">WEB connectors (1)</div>
<!-- chat -->
<div class="a" style="left:824px;top:1011px;width:55px;height:55px;border-radius:50%;background:#2d3540"></div>
<svg class="a" style="left:840px;top:1027px" width="23" height="22" viewBox="0 0 23 22"><path d="M3.5 2h13a3 3 0 0 1 3 3v14l-3.5-2.5h-12.5a3 3 0 0 1 -3 -3v-8.5a3 3 0 0 1 3-3z" stroke="#fff" stroke-width="1.6" fill="none"/><path d="M5.3 7.2h8.4M5.3 10.6h4.4" stroke="#fff" stroke-width="2"/></svg>
<div id="dov"></div>
</div>

<div class="a" style="left:0;top:0;width:1954px;height:2px;background:#3e4252"></div>
<svg class="a" style="left:1944px;top:1065px" width="10" height="10" viewBox="0 0 10 10"><path d="M10 0V10H0A10 10 0 0 0 10 0z" fill="#000"/></svg>
<div class="a" style="left:1604px;top:1077px;width:14px;height:2px;background:#5a5a5a"></div>
<div class="a" style="left:1624px;top:1077px;width:3px;height:2px;background:#444"></div>
<div class="a" style="left:1630px;top:1077px;width:8px;height:2px;background:#444"></div>
<div class="a" style="left:1641px;top:1077px;width:39px;height:2px;background:#3c3c3c"></div>
<div class="a" style="left:1683px;top:1077px;width:20px;height:2px;background:#3c3c3c"></div>
</body></html>
